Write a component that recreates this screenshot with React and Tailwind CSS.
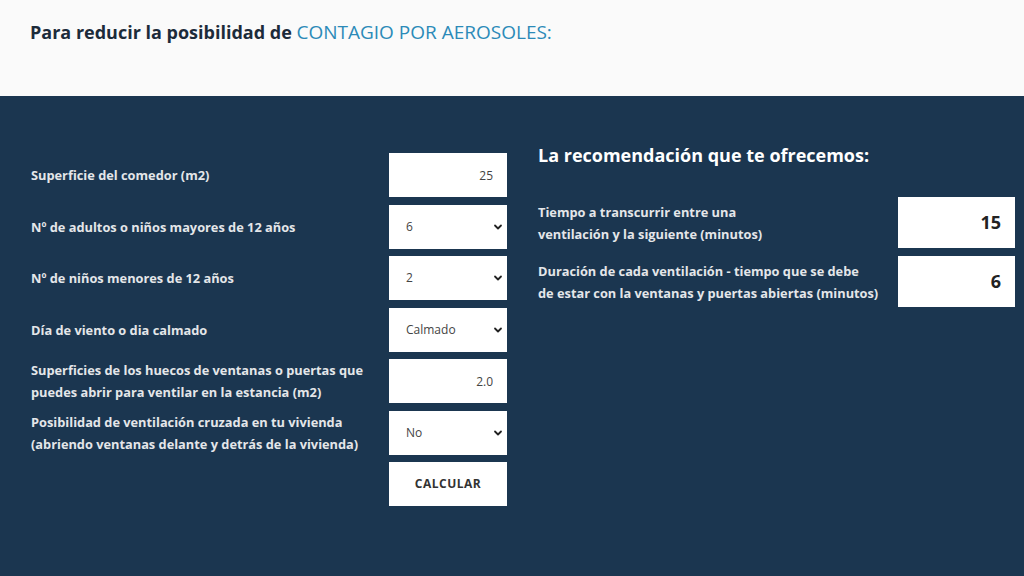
import React from "react";

const labelCls = "text-[12.8px] font-bold leading-[22px] text-[#e4e6e9]";

function Chevron() {
    return (
        <svg
            className="pointer-events-none absolute right-[4px] top-1/2 -translate-y-1/2"
            width="10"
            height="10"
            viewBox="0 0 10 10"
        >
            <path d="M2 3.5 L5 6.5 L8 3.5" fill="none" stroke="#222" strokeWidth="1.8" strokeLinecap="round" strokeLinejoin="round" />
        </svg>
    );
}

function TextField({ value }) {
    return (
        <input
            readOnly
            value={value}
            className="w-[118px] h-[44px] bg-white text-right pr-[14px] text-[12px] text-[#444] outline-none"
        />
    );
}

function SelectField({ value, options }) {
    return (
        <div className="relative w-[118px] h-[44px] bg-white">
            <select
                defaultValue={value}
                className="appearance-none w-full h-full bg-white pl-[17px] text-[12px] text-[#444] outline-none"
            >
                {options.map((o) => (
                    <option key={o}>{o}</option>
                ))}
            </select>
            <Chevron />
        </div>
    );
}

function Row({ label, children }) {
    return (
        <div className="flex items-center justify-between">
            <div className={labelCls}>{label}</div>
            {children}
        </div>
    );
}

function ResultRow({ label, value }) {
    return (
        <div className="flex items-center justify-between">
            <div className={labelCls}>{label}</div>
            <div className="w-[117px] h-[51px] bg-white flex items-center justify-end pr-[14px] text-[18px] font-bold text-[#222]">
                {value}
            </div>
        </div>
    );
}

export default function App() {
    return (
        <div className="w-[1024px] h-[576px] overflow-hidden" style={{ fontFamily: "'Open Sans', 'Noto Sans', sans-serif" }}>
            {/* Header */}
            <div className="h-[96px] bg-[#fafafa] pl-[30px] pt-[18px]">
                <h1 className="text-[18px] font-bold text-[#1c2b3a]">
                    Para reducir la posibilidad de{" "}
                    <span className="text-[19px] font-normal text-[#2b8ab8]">CONTAGIO POR AEROSOLES:</span>
                </h1>
            </div>

            {/* Calculator */}
            <div className="h-[480px] bg-[#1b3650] pl-[31px] pt-[57px]">
                <div className="grid grid-cols-[476px_477px] gap-[31px]">
                    {/* Inputs */}
                    <div className="flex flex-col gap-[7.5px]">
                        <Row label="Superficie del comedor (m2)">
                            <TextField value="25" />
                        </Row>
                        <Row label="Nº de adultos o niños mayores de 12 años">
                            <SelectField value="6" options={["1", "2", "3", "4", "5", "6", "7", "8"]} />
                        </Row>
                        <Row label="Nº de niños menores de 12 años">
                            <SelectField value="2" options={["0", "1", "2", "3", "4"]} />
                        </Row>
                        <Row label="Día de viento o dia calmado">
                            <SelectField value="Calmado" options={["Calmado", "Viento"]} />
                        </Row>
                        <Row
                            label={
                                <>
                                    Superficies de los huecos de ventanas o puertas que
                                    <br />
                                    puedes abrir para ventilar en la estancia (m2)
                                </>
                            }
                        >
                            <TextField value="2.0" />
                        </Row>
                        <Row
                            label={
                                <>
                                    Posibilidad de ventilación cruzada en tu vivienda
                                    <br />
                                    (abriendo ventanas delante y detrás de la vivienda)
                                </>
                            }
                        >
                            <SelectField value="No" options={["No", "Sí"]} />
                        </Row>
                        <div className="flex justify-end">
                            <button className="w-[118px] h-[44px] bg-white text-[12px] font-bold tracking-[0.5px] text-[#333]">
                                CALCULAR
                            </button>
                        </div>
                    </div>

                    {/* Results */}
                    <div>
                        <h2 className="text-[18px] font-bold text-white leading-[22px] mt-[-9px]">
                            La recomendación que te ofrecemos:
                        </h2>
                        <div className="mt-[31px] flex flex-col gap-[8px]">
                            <ResultRow
                                label={
                                    <>
                                        Tiempo a transcurrir entre una
                                        <br />
                                        ventilación y la siguiente (minutos)
                                    </>
                                }
                                value="15"
                            />
                            <ResultRow
                                label={
                                    <>
                                        Duración de cada ventilación - tiempo que se debe
                                        <br />
                                        de estar con la ventanas y puertas abiertas (minutos)
                                    </>
                                }
                                value="6"
                            />
                        </div>
                    </div>
                </div>
            </div>
        </div>
    );
}
